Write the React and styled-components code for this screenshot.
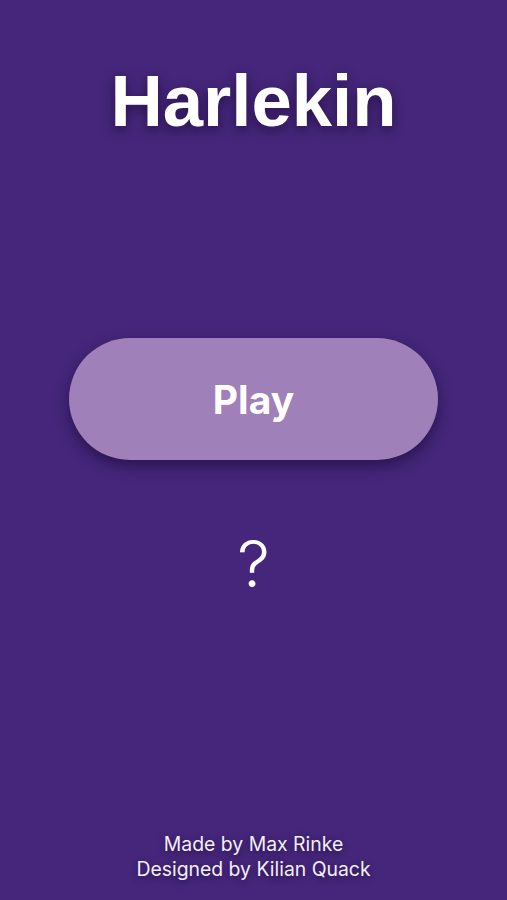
import React from 'react';
import styled, { createGlobalStyle } from 'styled-components';

const GlobalStyle = createGlobalStyle`
  html, body {
    margin: 0;
    padding: 0;
    background: #45267a;
  }
  * {
    box-sizing: border-box;
  }
`;

const App = () => {
  return (
    <>
      <GlobalStyle />
      <Screen>
        <Title>Harlekin</Title>
        <PlayButton>Play</PlayButton>
        <HelpButton>?</HelpButton>
        <Credits>
          <CreditLine>Made by Max Rinke</CreditLine>
          <CreditLine>Designed by Kilian Quack</CreditLine>
        </Credits>
      </Screen>
    </>
  );
};

export default App;

const Screen = styled.div`
  width: 507px;
  height: 900px;
  background: #45267a;
  display: flex;
  flex-direction: column;
  align-items: center;
  padding-top: 62px;
  padding-bottom: 18px;
`;

const Title = styled.h1`
  margin: 0;
  font-family: "Liberation Sans", Arial, sans-serif;
  font-weight: 700;
  font-size: 72.5px;
  line-height: 78px;
  color: #ffffff;
  text-shadow: 0 4px 12px rgba(20, 5, 45, 0.6);
`;

const PlayButton = styled.button`
  margin-top: 198px;
  width: 369px;
  height: 122px;
  border: none;
  border-radius: 61px;
  background: #9f80b8;
  color: #ffffff;
  font-family: Inter, "Liberation Sans", sans-serif;
  font-weight: 700;
  font-size: 39px;
  box-shadow: 0 6px 14px rgba(20, 5, 45, 0.55);
  cursor: pointer;
`;

const HelpButton = styled.div`
  margin-top: 66px;
  font-family: Inter, "Liberation Sans", sans-serif;
  font-weight: 300;
  font-size: 65px;
  line-height: 76px;
  color: #ffffff;
`;

const Credits = styled.div`
  margin-top: auto;
  display: flex;
  flex-direction: column;
  align-items: center;
`;

const CreditLine = styled.div`
  font-family: Inter, "Liberation Sans", sans-serif;
  font-size: 19.4px;
  line-height: 25px;
  color: #f3eefa;
  text-shadow: 0 2px 6px rgba(20, 5, 45, 0.6);
`;
